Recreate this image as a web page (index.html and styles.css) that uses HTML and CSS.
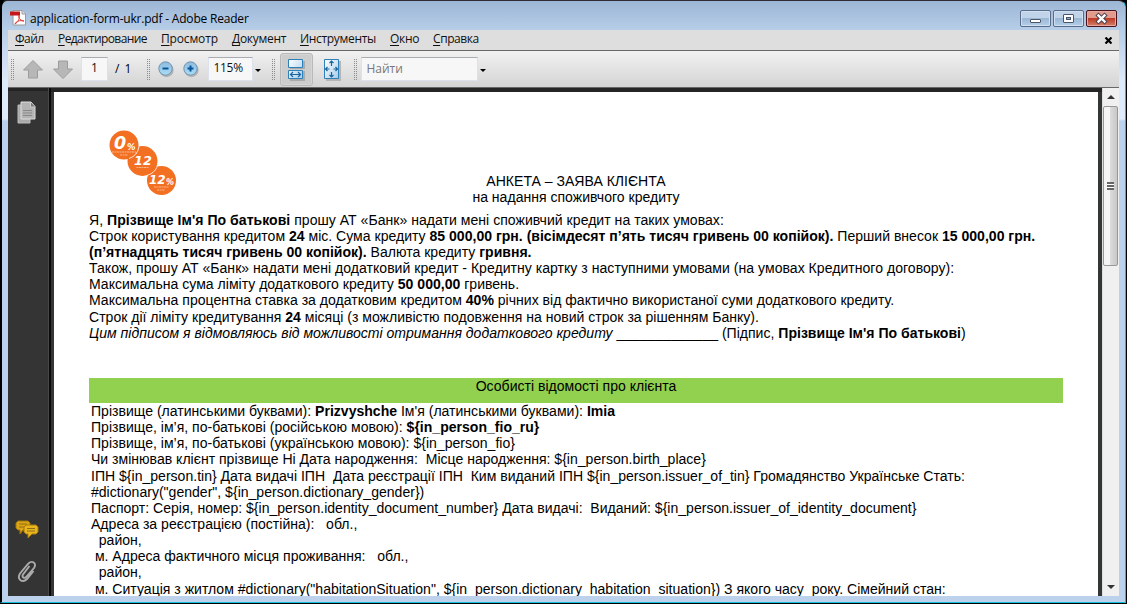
FILE: index.html
```html
<!DOCTYPE html>
<html lang="uk">
<head>
<meta charset="utf-8">
<title>application-form-ukr.pdf - Adobe Reader</title>
<link rel="stylesheet" href="styles.css">
</head>
<body>
<div class="window">
  <header class="titlebar">
    <svg class="pdf-icon" width="17" height="17" viewBox="0 0 17 17"><path d="M3 .5h9l3.500 3.500v11H3z" fill="#fff" stroke="#999"/><path d="M12 .5v3.500h3.500" fill="#ddd" stroke="#999"/><path d="M0 1.500h10v4H0z" fill="#c5161c"/><path d="M9 5c1 4-1 7-4 9 1-3 5-4 9-3-3 0-6-3-5-6z" fill="none" stroke="#e03a35"/></svg>
    <span class="window-title">application-form-ukr.pdf - Adobe Reader</span>
    <div class="controls">
      <span class="control"><svg width="29" height="15" viewBox="0 0 29 15"><rect x="9.500" y="8.500" width="10" height="3" rx=".5" fill="#fff" stroke="#4b5468"/></svg></span>
      <span class="control"><svg width="29" height="15" viewBox="0 0 29 15"><rect x="9.500" y="3.500" width="10" height="8" rx=".5" fill="#fff" stroke="#4b5468"/><rect x="12.500" y="6.500" width="4" height="2" fill="#8fa9c9" stroke="#4b5468"/></svg></span>
      <span class="control close"><svg width="29" height="15" viewBox="0 0 29 15"><path d="M11.500 4.500l6 6M17.500 4.500l-6 6" stroke="#4b4250" stroke-width="4.400" stroke-linecap="square"/><path d="M11.500 4.500l6 6M17.500 4.500l-6 6" stroke="#fff" stroke-width="2.400" stroke-linecap="square"/></svg></span>
    </div>
  </header>
  <nav class="menu">
    <span class="m1"><u>Ф</u>айл</span><span class="m2"><u>Р</u>едактирование</span><span class="m3"><u>П</u>росмотр</span><span class="m4"><u>Д</u>окумент</span><span class="m5"><u>И</u>нструменты</span><span class="m6"><u>О</u>кно</span><span class="m7"><u>С</u>правка</span>
    <svg class="menu-close" width="8" height="7" viewBox="0 0 8 7"><path d="M1.500 .5l6 6M7.500 .5l-6 6" stroke="#000" stroke-width="2.200"/></svg>
  </nav>
  <div class="toolbar">
    <i class="grip"></i>
    <svg class="arrow-up" width="20" height="19" viewBox="0 0 20 19"><path d="M10 .5l9.500 9.500h-5v8h-9v-8h-5z" fill="#b7b7b7" stroke="#9c9c9c"/></svg>
    <svg class="arrow-down" width="20" height="19" viewBox="0 0 20 19"><path d="M10 18.500L19.500 9h-5V1h-9v8h-5z" fill="#b7b7b7" stroke="#9c9c9c"/></svg>
    <span class="field page-no">1</span>
    <span class="page-total">/ 1</span>
    <i class="grip g2"></i>
    <svg class="zoom-out" width="16" height="17" viewBox="0 0 16 17"><defs><linearGradient id="ball" x2="0" y2="1"><stop stop-color="#8fbbdd"/><stop offset="1" stop-color="#a9dcf6"/></linearGradient></defs><circle cx="8.500" cy="9" r="7.200" fill="#b4b4b4"/><circle cx="7.500" cy="7.500" r="6.700" fill="url(#ball)" stroke="#7095b3"/><path d="M4.500 7.500h6" stroke="#07569b" stroke-width="2"/></svg>
    <svg class="zoom-in" width="16" height="17" viewBox="0 0 16 17"><circle cx="8.500" cy="9" r="7.200" fill="#b4b4b4"/><circle cx="7.500" cy="7.500" r="6.700" fill="url(#ball)" stroke="#7095b3"/><path d="M4.500 7.500h6M7.500 4.500v6" stroke="#07569b" stroke-width="2"/></svg>
    <span class="field zoom-value">115%</span>
    <i class="caret"></i>
    <i class="grip g3"></i>
    <span class="fit-width"><svg width="17" height="22" viewBox="0 0 17 22"><defs><linearGradient id="sheet" x2="1" y2="1"><stop stop-color="#fff"/><stop offset="1" stop-color="#a5cdeb"/></linearGradient></defs><path d="M2 2h15v8H2zM2 12h15v10H2z" fill="#aaa"/><path d="M.5.500h14v8H.5zM.5 11.500h14v8H.5z" fill="url(#sheet)" stroke="#2e81b8"/><path d="M3 15.500h9M5 13l-2.500 2.500L5 18M10 13l2.500 2.500L10 18" fill="none" stroke="#1c649f" stroke-width="1.200"/></svg></span>
    <svg class="fit-page" width="17" height="22" viewBox="0 0 17 22"><path d="M2 2h15v20H2z" fill="#b5b5b5"/><path d="M.5.500h14v19H.5z" fill="url(#sheet)" stroke="#2e81b8"/><path d="M7.500 2v5M5.500 4l2-2 2 2M7.500 13v5M5.500 16l2 2 2-2M1.500 10h4M3.500 8l-2 2 2 2M9.500 10h4M11.500 8l2 2-2 2" fill="none" stroke="#1c649f" stroke-width="1.200"/></svg>
    <i class="grip g4"></i>
    <span class="field find">Найти</span>
    <i class="caret"></i>
  </div>
  <main class="workspace">
    <aside class="sidebar">
      <svg class="pages-icon" width="20" height="23" viewBox="0 0 20 23"><path d="M1 4h12v18H1z" fill="#aaa" stroke="#bbb"/><path d="M4 1h10l4 4.500V18H4z" fill="#b4b4b4" stroke="#ddd"/><path d="M13.500 1v5H18" fill="#777" stroke="#ccc"/><path d="M6 9.500h9M6 12h9M6 14.500h9" stroke="#888"/></svg>
      <svg class="comments-icon" width="24" height="20" viewBox="0 0 24 20"><path d="M3 1h10l2 2v5l-2 2H8l-3 4v-4H3L1 8V3z" fill="#dba514" stroke="#9e730b"/><path d="M4 4h8M4 7h5" stroke="#8e6d14"/><path d="M11 5h10l2 2v5l-2 2h-4l-4 4v-4h-2l-2-2V7z" fill="#e8b51f" stroke="#a7790c"/><path d="M12 8.500h8M12 11h8" stroke="#8e6d14"/></svg>
      <svg class="clip-icon" width="20" height="23" viewBox="0 0 20 23"><path d="M12.500 6L6 14.500c-1.500 3 1.500 4.500 3.500 2.200L17 8c3-5-2-8-5.500-4.500L3 13.500c-3.500 6 2.500 10 7 5.500l6.500-8" fill="none" stroke="#aaa" stroke-width="1.900"/></svg>
    </aside>
    <article class="page">
      <svg class="logo" width="74" height="72" viewBox="0 1 74 72"><g fill="#f36f21"><circle cx="17" cy="18" r="14.500"/><circle cx="35.500" cy="34" r="15"/><circle cx="54.500" cy="53.500" r="14.500"/></g><path d="M22 31.500a14.700 14.700 0 0 0 10-12.200M40.500 48.200a15 15 0 0 0 9.500-8" fill="none" stroke="#fff" stroke-width=".8"/><g class="logo-text"><text x="7" y="22" font-size="17.500">0</text><text x="20" y="22.500" font-size="8.500">%</text><text x="27" y="37.500" font-size="12.800">12</text><text x="42" y="57" font-size="12">12</text><text x="59" y="57.500" font-size="8">%</text></g><path d="M5 25h24M13 28h8M29.500 40.500h12M47 60h15M50 63h8" stroke="#fbb58b" stroke-width="1.200" stroke-dasharray="2 .5"/></svg>
      <h1 class="title"><span>АНКЕТА – ЗАЯВА КЛІЄНТА</span><span>на надання споживчого кредиту</span></h1>
      <div class="terms">
        <p class="loose">Я, <b>Прізвище Ім'я По батькові</b> прошу АТ «Банк» надати мені споживчий кредит на таких умовах:</p>
        <p>Строк користування кредитом <b>24</b> міс. Сума кредиту <b>85 000,00 грн. (вісімдесят п’ять тисяч гривень 00 копійок).</b> Перший внесок <b>15 000,00 грн.</b></p>
        <p><b>(п’ятнадцять тисяч гривень 00 копійок).</b> Валюта кредиту <b>гривня.</b></p>
        <p class="loose">Також, прошу АТ «Банк» надати мені додатковий кредит - Кредитну картку з наступними умовами (на умовах Кредитного договору):</p>
        <p>Максимальна сума ліміту додаткового кредиту <b>50 000,00</b> гривень.</p>
        <p>Максимальна процентна ставка за додатковим кредитом <b>40%</b> річних від фактично використаної суми додаткового кредиту.</p>
        <p>Строк дії ліміту кредитування <b>24</b> місяці (з можливістю подовження на новий строк за рішенням Банку).</p>
        <p><em>Цим підписом я відмовляюсь від можливості отримання додаткового кредиту</em> _____________ (Підпис, <b>Прізвище Ім'я По батькові</b>)</p>
      </div>
      <h2 class="section">Особисті відомості про клієнта</h2>
      <div class="details">
        <p>Прізвище (латинськими буквами): <b>Prizvyshche</b> Ім'я (латинськими буквами): <b>Imia</b></p>
        <p>Прізвище, ім’я, по-батькові (російською мовою): <b>${in_person_fio_ru}</b></p>
        <p>Прізвище, ім’я, по-батькові (українською мовою): ${in_person_fio}</p>
        <p>Чи змінював клієнт прізвище Ні Дата народження:  Місце народження: ${in_person.birth_place}</p>
        <p>ІПН ${in_person.tin} Дата видачі ІПН  Дата реєстрації ІПН  Ким виданий ІПН ${in_person.issuer_of_tin} Громадянство Українське Стать:</p>
        <p>#dictionary("gender", ${in_person.dictionary_gender})</p>
        <p>Паспорт: Серія, номер: ${in_person.identity_document_number} Дата видачі:  Виданий: ${in_person.issuer_of_identity_document}</p>
        <p>Адреса за реєстрацією (постійна):   обл.,</p>
        <p>  район,</p>
        <p> м. Адреса фактичного місця проживання:   обл.,</p>
        <p>  район,</p>
        <p> м. Ситуація з житлом #dictionary("habitationSituation", ${in_person.dictionary_habitation_situation}) З якого часу  року. Сімейний стан:</p>
      </div>
    </article>
    <div class="scrollbar"><i class="scroll-up"></i><span class="thumb"><i></i></span><i class="scroll-down"></i></div>
  </main>
</div>
</body>
</html>
```

FILE: styles.css
```css
* { box-sizing: border-box; }
body { margin: 0; width: 1127px; height: 604px; overflow: hidden; background: #000; font: 12px/16px "Open Sans", "Noto Sans", sans-serif; }
svg { display: block; flex: none; }
.window { width: 1126px; height: 603px; padding: 1px 6px 6px; border: 1px solid #18bed5; border-top: 1px solid #302c32; border-left: 2px solid #000; border-radius: 7px 7px 0 0; background: linear-gradient(#9cb6d5, #b7cee8 29px, #dceafa 80px, #dfebfa 118px, #bbd1ec 120px, #bbd1ec); }
.titlebar { height: 28px; display: flex; align-items: flex-start; }
.pdf-icon { margin: 8px 0 0 2px; }
.window-title { margin: 9px 0 0 3px; letter-spacing: -.2px; }
.controls { display: flex; gap: 2px; margin: 8px 2px 0 auto; }
.control { width: 31px; height: 17px; border: 1px solid #596b88; border-radius: 2px; box-shadow: inset 0 0 0 1px #d1e0f0; background: linear-gradient(#c1d3e8 48%, #9bb7d6 50%, #b4cfe8); }
.control.close { border-color: #47131c; box-shadow: inset 0 0 0 1px #e8a79f; background: linear-gradient(#e19b8d 48%, #bd3a26 50%, #d48169); }
.menu { width: 1111px; height: 20px; background: #dedede; display: grid; grid-template-columns: 43px 103px 71px 68px 90px 43px 1fr auto; padding: 1px 7px 0; color: #111; white-space: nowrap; }
.menu u { text-underline-offset: 2px; }
.m1 { letter-spacing: -.55px; }
.m2 { letter-spacing: -.58px; }
.m3 { letter-spacing: -.15px; }
.m4 { letter-spacing: -.3px; }
.m5 { letter-spacing: -.32px; }
.m6 { letter-spacing: -.3px; }
.m7 { letter-spacing: -.43px; }
.menu-close { margin-top: 6px; }
.toolbar { height: 38px; border-top: 1px solid #686868; border-bottom: 1px solid #686868; background: linear-gradient(#f1f1f1, #d4d4d4); display: flex; align-items: center; }
.grip { flex: none; width: 4px; height: 21px; margin-left: 3px; background: conic-gradient(at 1px 1px, transparent 75%, #8c8c8c 0) 0 0 / 2px 2px; }
.arrow-up { margin-left: 8px; }
.arrow-down { margin-left: 10px; }
.field { flex: none; border: 1px solid #dce2ed; border-top-color: #a9adb3; background: #f7f7f7; color: #111; }
.page-no { width: 27px; height: 24px; margin-left: 8px; text-align: center; line-height: 20px; }
.page-total { margin-left: 7px; word-spacing: 2px; }
.g2 { margin-left: 16px; }
.zoom-out { margin-left: 7px; }
.zoom-in { margin-left: 9px; }
.zoom-value { width: 45px; height: 24px; margin-left: 9px; padding-left: 4px; line-height: 20px; letter-spacing: -.25px; }
.caret { flex: none; border: 3px solid transparent; border-top-color: #000; border-bottom: 0; margin: 2px 0 0 2px; }
.g3 { margin-left: 11px; }
.fit-width { width: 33px; height: 33px; margin-left: 4px; padding: 5px 0 0 7px; border: 1px solid #b9b9b9; border-radius: 3px; background: #cdcdcd; box-shadow: inset 0 0 0 1px #d6d6d6; }
.fit-page { margin: 1px 0 0 11px; }
.g4 { margin-left: 13px; }
.find { width: 117px; height: 24px; margin-left: 3px; padding-left: 4px; color: #777; line-height: 22px; }
.workspace { height: 508px; background: #343635; display: grid; grid-template-columns: 46px 1044px 21px; padding-top: 4px; box-shadow: inset 0 4px #252525; }
.sidebar { width: 43px; height: 508px; margin-top: -4px; background: #343434; border-right: 2px solid #0a0a0a; box-shadow: inset -1px 0 #474747, inset 0 3px #242424; display: flex; flex-direction: column; align-items: flex-start; }
.pages-icon { margin: 13px 0 0 9px; }
.comments-icon { margin: 396px 0 0 7px; }
.clip-icon { margin: 20px 0 0 9px; }
.page { height: 504px; overflow: hidden; background: #fff; color: #000; padding: 36px 35px 0; font: 14.06px/16.15px "Liberation Sans", Arial, sans-serif; }
.logo { margin-left: 18px; }
.logo-text { fill: #fff; font-family: "DejaVu Sans", sans-serif; font-style: italic; font-weight: bold; }
.title { margin: -27px 0 0; font-size: inherit; font-weight: normal; text-align: center; display: grid; }
.terms { margin-top: 6.25px; }
p { margin: 0; white-space: pre; }
.loose { letter-spacing: .022px; }
.section { height: 25px; margin: 37.1px 0 0; background: #92d050; font-size: inherit; font-weight: normal; text-align: center; }
.details { padding-left: 2px; }
.scrollbar { width: 17px; margin: -4px 0 0 4px; height: 508px; background: #f0f0f0; box-shadow: inset 1px 0 #dedede; display: flex; flex-direction: column; align-items: center; }
.scroll-up, .scroll-down { border: 4px solid transparent; border-top: 0; border-bottom: 4px solid #333; margin-top: 7px; }
.thumb { width: 15px; height: 160px; margin-top: 7px; border: 1px solid #989898; border-radius: 2px; background: linear-gradient(90deg, #f5f5f5 45%, #dadada 50%, #c8c8c8); display: flex; align-items: center; justify-content: center; }
.thumb i { width: 7px; height: 8px; background: repeating-linear-gradient(#666 0 2px, #fff 2px 3px); }
.scroll-down { border-bottom: 0; border-top: 4px solid #333; margin: auto 0 7px; }
```
